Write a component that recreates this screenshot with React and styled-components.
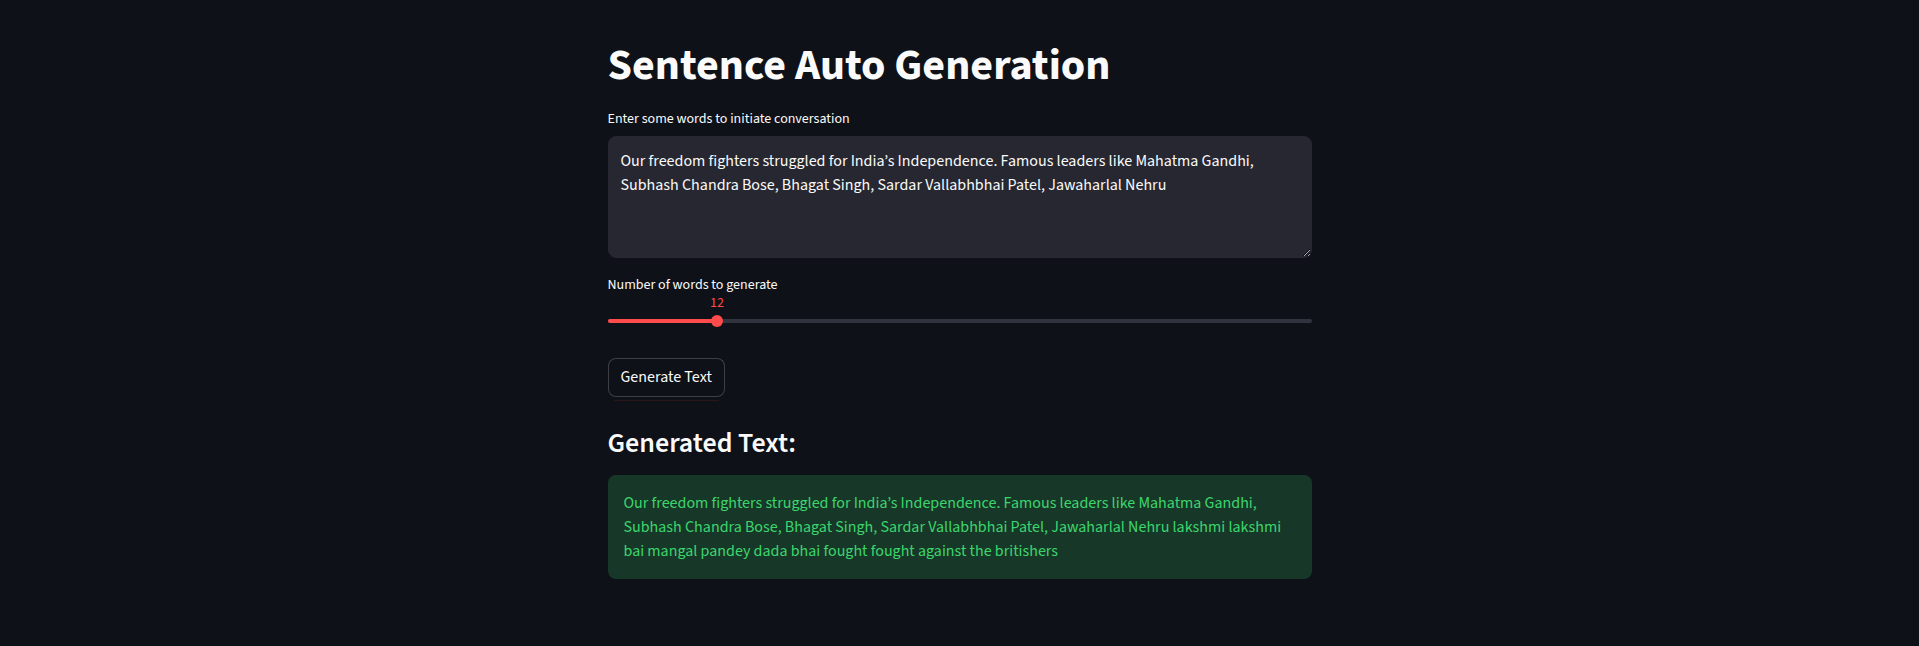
import React from "react";
import styled, { createGlobalStyle } from "styled-components";

const FONT = `"Source Sans 3", "Source Sans Pro", Lato, sans-serif`;

const GlobalStyle = createGlobalStyle`
  html, body {
    margin: 0;
    padding: 0;
    background: #0e1117;
    color: #fafafa;
    font-family: ${FONT};
    color-scheme: dark;
  }
  * { box-sizing: border-box; }
`;

const Page = styled.main`
  min-height: 646px;
  background: #0e1117;
`;

const Column = styled.div`
  width: 704px;
  margin: 0 auto;
  padding-top: 40px;
  display: flex;
  flex-direction: column;
`;

const Title = styled.h1`
  margin: 0;
  font-size: 44px;
  font-weight: 700;
  line-height: 1.2;
  color: #fafafa;
`;

const Label = styled.label`
  display: block;
  font-size: 14px;
  line-height: 21px;
  color: #fafafa;
  margin-top: ${(p) => p.$top}px;
`;

const TextArea = styled.textarea`
  display: block;
  width: 100%;
  height: 122px;
  margin-top: 6px;
  padding: 12px;
  border: 1px solid #262730;
  border-radius: 8px;
  background: #262730;
  color: #fafafa;
  font-family: ${FONT};
  font-size: 16px;
  line-height: 24px;
  resize: vertical;
  outline: none;
`;

const SliderArea = styled.div`
  position: relative;
  padding-top: 23px;
  padding-bottom: 18.3px;
`;

const Track = styled.div`
  position: relative;
  height: 4px;
  border-radius: 2px;
  background: #31333f;
`;

const Fill = styled.div`
  position: absolute;
  left: 0;
  top: 0;
  bottom: 0;
  border-radius: 2px;
  background: #ff4b4b;
`;

const Thumb = styled.div`
  position: absolute;
  top: 50%;
  width: 12px;
  height: 12px;
  margin-left: -6px;
  margin-top: -6px;
  border-radius: 50%;
  background: #ff4b4b;
`;

const ThumbValue = styled.div`
  position: absolute;
  top: -0.5px;
  transform: translateX(-50%);
  font-size: 14px;
  line-height: 14px;
  color: #ff4b4b;
  font-family: ${FONT};
`;

const ButtonWrap = styled.div`
  position: relative;
  align-self: flex-start;
  margin-top: 16px;
  &::after {
    content: "";
    position: absolute;
    left: 6px;
    right: 6px;
    bottom: -4px;
    height: 1px;
    background: #2a1518;
  }
`;

const Button = styled.button`
  display: inline-flex;
  align-items: center;
  justify-content: center;
  min-height: 39px;
  padding: 4px 12px;
  border: 1px solid rgba(250, 250, 250, 0.2);
  border-radius: 8px;
  background: #0e1117;
  color: #fafafa;
  font-family: ${FONT};
  font-size: 16px;
  line-height: 24px;
  cursor: pointer;
`;

const SubHeading = styled.h3`
  margin: 30.5px 0 0;
  font-size: 28px;
  font-weight: 600;
  line-height: 1.2;
  color: #fafafa;
`;

const Success = styled.div`
  margin-top: 14px;
  padding: 16px;
  border-radius: 8px;
  background: #173828;
  color: #3dd56d;
  font-size: 16px;
  line-height: 24px;
  white-space: pre-line;
`;

const PROMPT =
  "Our freedom fighters struggled for India\u2019s Independence. Famous leaders like Mahatma Gandhi,\nSubhash Chandra Bose, Bhagat Singh, Sardar Vallabhbhai Patel, Jawaharlal Nehru";

const GENERATED =
  PROMPT + " lakshmi lakshmi bai mangal pandey dada bhai fought fought against the britishers";

const MIN = 5;
const MAX = 50;
const VALUE = 12;

export default function App() {
  const pct = ((VALUE - MIN) / (MAX - MIN)) * 100;
  return (
    <Page>
      <GlobalStyle />
      <Column>
        <Title>Sentence Auto Generation</Title>
        <Label $top={16}>Enter some words to initiate conversation</Label>
        <TextArea defaultValue={PROMPT} spellCheck={false} />
        <Label $top={17.5}>Number of words to generate</Label>
        <SliderArea>
          <Track>
            <Fill style={{ width: `${pct}%` }} />
            <Thumb style={{ left: `${pct}%` }} />
          </Track>
          <ThumbValue style={{ left: `${pct}%` }}>{VALUE}</ThumbValue>
        </SliderArea>
        <ButtonWrap>
          <Button>Generate Text</Button>
        </ButtonWrap>
        <SubHeading>Generated Text:</SubHeading>
        <Success>{GENERATED}</Success>
      </Column>
    </Page>
  );
}
